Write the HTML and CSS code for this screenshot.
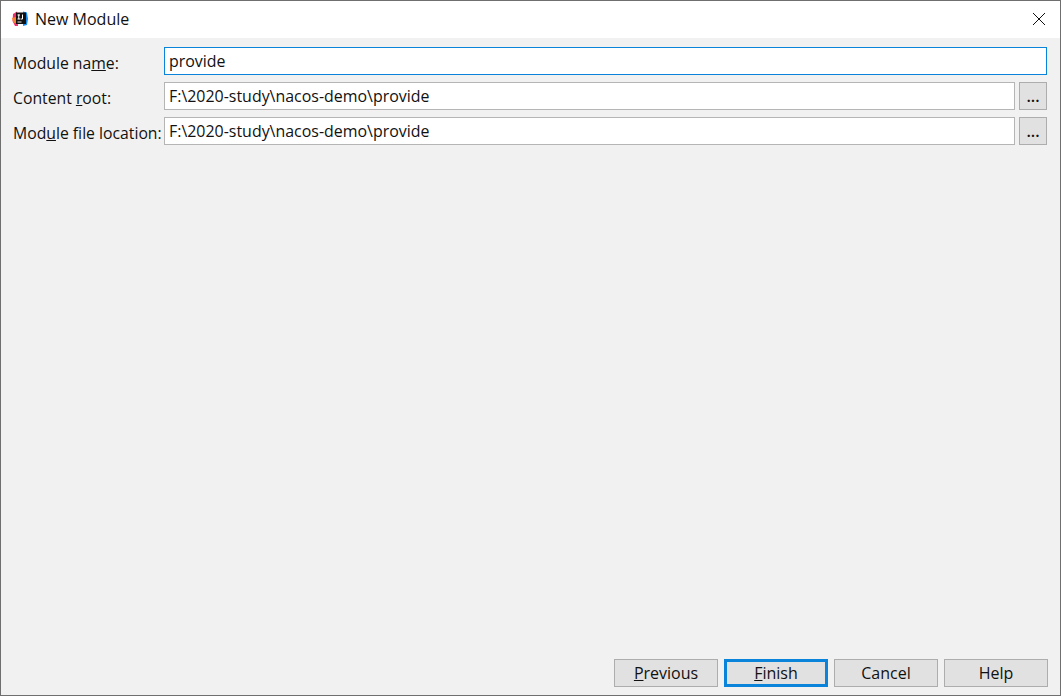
FILE: index.html
```html
<!DOCTYPE html>
<html lang="en">
<head>
<meta charset="utf-8">
<title>New Module</title>
<link rel="stylesheet" href="styles.css">
</head>
<body>
<div class="window">
  <header class="titlebar">
    <svg class="app-icon" width="16" height="16" viewBox="0 0 16 16" aria-hidden="true">
      <path d="M1 3 L5 0.5 L6 15 L3 15 L0.5 10 Z" fill="#ef2f6c"/>
      <path d="M0 7 L4 6 L4 12 L1.5 12 Z" fill="#f7822d"/>
      <path d="M11 0.5 L15 1.5 L16 8 L15 14 L11 15 Z" fill="#1a8cf0"/>
      <rect x="4" y="1.5" width="10" height="11.5" fill="#111"/>
      <rect x="5.5" y="10.5" width="4" height="1" fill="#e8e8e8"/>
      <rect x="5.5" y="3.5" width="2.5" height="1" fill="#fff"/>
      <rect x="6.25" y="3.5" width="1" height="4.5" fill="#fff"/>
      <rect x="5.5" y="7.5" width="2.5" height="1" fill="#fff"/>
      <path d="M10.5 3.5 V8 H8.5" fill="none" stroke="#fff" stroke-width="1"/>
    </svg>
    <span class="title">New Module</span>
    <svg class="close" width="12" height="12" viewBox="0 0 12 12" aria-hidden="true">
      <path d="M0 0 L12 12 M12 0 L0 12" stroke="#111" stroke-width="1" fill="none"/>
    </svg>
  </header>
  <main class="content">
    <form class="form">
      <label class="label"><span>Module na<u>m</u>e:</span></label>
      <div class="field focused wide">provide</div>
      <label class="label"><span>Content <u>r</u>oot:</span></label>
      <div class="field">F:\2020-study\nacos-demo\provide</div>
      <button type="button" class="browse">...</button>
      <label class="label"><span>Mod<u>u</u>le file location:</span></label>
      <div class="field">F:\2020-study\nacos-demo\provide</div>
      <button type="button" class="browse">...</button>
    </form>
    <footer class="actions">
      <button type="button" class="btn"><u>P</u>revious</button>
      <button type="button" class="btn primary"><u>F</u>inish</button>
      <button type="button" class="btn">Cancel</button>
      <button type="button" class="btn">Help</button>
    </footer>
  </main>
</div>
</body>
</html>
```
FILE: styles.css
```css
* { box-sizing: border-box; }
html, body { margin: 0; height: 100%; }
body {
  font-family: "Open Sans", "Noto Sans", sans-serif;
  font-size: 16px;
  color: #111;
  overflow: hidden;
}
.window {
  width: 1061px;
  height: 696px;
  border: 1px solid #6f6f6f;
  display: flex;
  flex-direction: column;
  background: #f1f1f1;
}
.titlebar {
  height: 37px;
  background: #fff;
  display: flex;
  align-items: center;
  padding: 0 15px 1px 11px;
  flex: none;
}
.app-icon { flex: none; }
.title { margin-left: 7px; }
.close { margin-left: auto; }
.content {
  flex: 1;
  display: flex;
  flex-direction: column;
  justify-content: space-between;
  padding: 9px 12px 8px 12px;
}
.form {
  display: grid;
  grid-template-columns: 151px 851px 32px;
  row-gap: 7px;
  grid-auto-rows: 28px;
}
.label {
  display: flex;
  align-items: center;
  padding-top: 3px;
  white-space: nowrap;
  font-size: 15.75px;
}
.field {
  background: #fff;
  border: 1px solid #b5b5b5;
  padding: 0 4px;
  display: flex;
  align-items: center;
  font-size: 15.95px;
}
.field.wide { grid-column: 2 / 4; }
.field.focused { border-color: #0a84db; }
.browse {
  margin-left: 4px;
  width: 28px;
  height: 28px;
  background: #e1e1e1;
  border: 1px solid #adadad;
  padding: 0;
  font: inherit;
  font-weight: 600;
  color: #111;
}
.actions { display: flex; justify-content: flex-end; gap: 6px; }
.btn {
  width: 104px;
  height: 28px;
  background: #e1e1e1;
  border: 1px solid #adadad;
  padding: 0;
  font: inherit;
  color: #111;
}
.btn.primary { border: 3px solid #0a84db; }
```
